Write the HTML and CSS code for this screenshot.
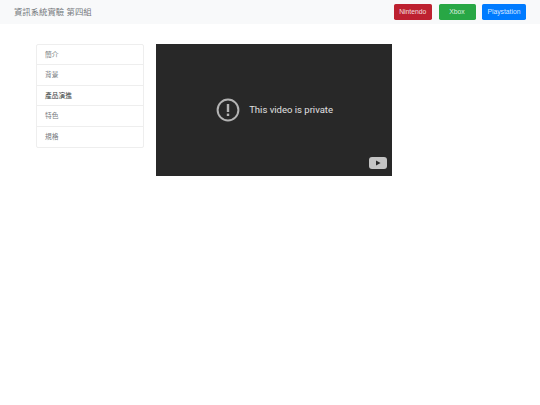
FILE: index.html
```html
<!DOCTYPE html>
<html>
<head>
<meta charset="UTF-8">
<title>資訊系統實驗 第四組</title>
<link rel="stylesheet" href="styles.css">
</head>
<body>
<nav class="navbar">
	<a class="brand" href="#">資訊系統實驗 第四組</a>
	<div class="nav_btns">
		<a class="btn btn_red" href="#">Nintendo</a>
		<a class="btn btn_green" href="#">Xbox</a>
		<a class="btn btn_blue" href="#">Playstation</a>
	</div>
</nav>
<div class="content">
	<ul class="list">
		<li class="item">簡介</li>
		<li class="item">背景</li>
		<li class="item item_dark">產品演進</li>
		<li class="item">特色</li>
		<li class="item">規格</li>
	</ul>
	<div class="video">
		<div class="private">
			<svg class="private_icon" viewBox="0 0 24 24" width="24" height="24">
				<circle cx="12" cy="12" r="10.4" fill="none" stroke="#b3b3b3" stroke-width="2"/>
				<rect x="10.8" y="6" width="2.4" height="8" fill="#b3b3b3"/>
				<rect x="10.8" y="15.6" width="2.4" height="2.4" fill="#b3b3b3"/>
			</svg>
			<span class="private_text">This video is private</span>
		</div>
		<svg class="yt_logo" viewBox="0 0 18 12" width="18" height="12">
			<rect width="18" height="12" rx="3" fill="#c4c4c4"/>
			<path d="M7 3.4 L11.6 6 L7 8.6 Z" fill="#282828"/>
		</svg>
	</div>
</div>
</body>
</html>
```

FILE: styles.css
```css
*{
	margin:0;
	padding:0;
	box-sizing:border-box;
}
body{
	background-color:#fff;
	font-family:"Liberation Sans","Noto Sans CJK TC",sans-serif;
}
.navbar{
	display:flex;
	justify-content:space-between;
	align-items:center;
	height:23.6px;
	padding:0 14px;
	background-color:#f8f9fa;
}
.brand{
	margin-bottom:1.5px;
	font-size:8.4px;
	color:#74787c;
	text-decoration:none;
}
.nav_btns{
	display:flex;
	gap:6.5px;
	margin-bottom:0.5px;
}
.btn{
	display:block;
	height:16px;
	line-height:16px;
	font-size:6.75px;
	color:rgba(255,255,255,0.85);
	text-align:center;
	text-decoration:none;
	border-radius:1.7px;
}
.btn_red{
	width:38.5px;
	background-color:#bd2130;
}
.btn_green{
	width:37px;
	background-color:#28a745;
}
.btn_blue{
	width:44px;
	background-color:#007bff;
}
.content{
	display:flex;
	align-items:flex-start;
	gap:12.5px;
	padding:20.4px 0 0 36px;
}
.list{
	width:107.5px;
	list-style:none;
	background-color:#fff;
	border:0.5px solid #eee;
	border-radius:2px;
}
.item{
	height:20.5px;
	line-height:20px;
	padding-left:8px;
	font-size:6.75px;
	color:#777b80;
	border-bottom:0.5px solid #eee;
}
.item:last-child{
	border-bottom:none;
}
.item_dark{
	color:#3a3e42;
}
.video{
	position:relative;
	display:flex;
	align-items:center;
	justify-content:center;
	width:236.2px;
	height:132.5px;
	background-color:#282828;
}
.private{
	display:flex;
	align-items:center;
	gap:9px;
	margin:0 0 1px 1px;
}
.private_text{
	font-family:Roboto,sans-serif;
	font-size:9.5px;
	font-weight:400;
	color:#e0e0e0;
}
.yt_logo{
	position:absolute;
	right:5px;
	bottom:7.5px;
}
```
